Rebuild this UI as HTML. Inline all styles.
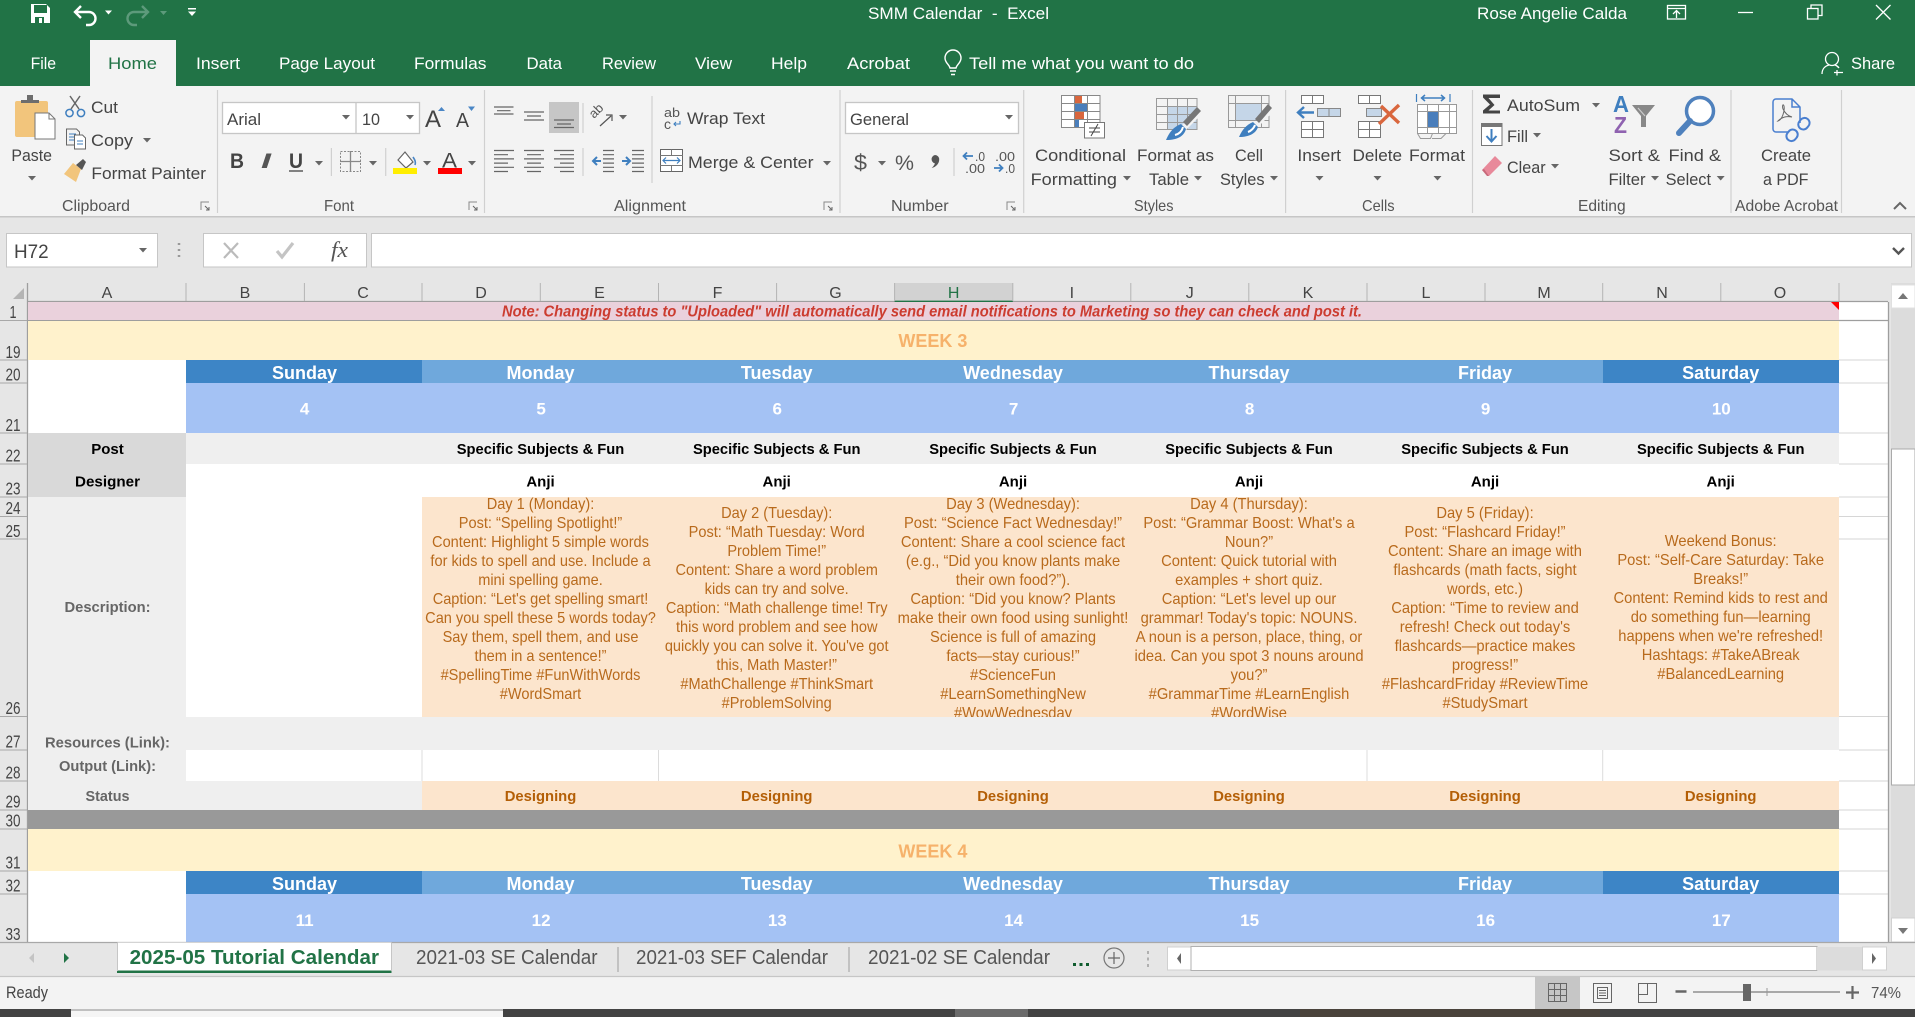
<!DOCTYPE html>
<html lang="en"><head><meta charset="utf-8"><title>SMM Calendar - Excel</title>
<style>
html,body{margin:0;padding:0;background:#f3f3f3;overflow:hidden}
svg{display:block;font-family:"Liberation Sans",Arial,sans-serif}
.r{font-size:17px;fill:#444}
.t{font-size:17px;fill:#fff}
.g{font-size:16px;fill:#555}
.c{font-size:16px;fill:#444;text-anchor:middle}
.n{font-size:17.5px;fill:#444;text-anchor:middle}
.d{font-size:18px;font-weight:700;fill:#fff;text-anchor:middle}
.dt{font-size:17px;font-weight:700;fill:#fff;text-anchor:middle;transform:translateX(.6px)}
.b{font-size:15px;font-weight:700;fill:#000;text-anchor:middle}
.l{font-size:14.5px;font-weight:700;fill:#666;text-anchor:middle}
.st{font-size:15px;font-weight:700;fill:#b45f06;text-anchor:middle}
.p{font-size:15.5px;fill:#b86a1c;text-anchor:middle}
.tab{font-size:20px;fill:#555}
</style></head><body>
<svg width="1915" height="1017" viewBox="0 0 1915 1017" xmlns="http://www.w3.org/2000/svg">
<defs>
<path id="dd" d="M-4,-2h8l-4,4.5z" fill="#666"/>
<g id="launch" fill="none" stroke="#888" stroke-width="1"><path d="M-4,4v-8h8"/><path d="M0,0l4,4M4,1v3h-3" stroke="#666"/></g>
<clipPath id="clipd"><rect x="422" y="497" width="1417" height="220"/></clipPath>
</defs>

<!-- title bar & tab strip -->
<rect width="1915" height="86" fill="#217346"/>
<path d="M31,4h15l4,4v15h-19z" fill="#fff"/><rect x="34" y="5" width="13" height="8" fill="#217346"/><rect x="35" y="17" width="9" height="6" fill="#217346"/><rect x="39" y="18" width="3" height="5" fill="#fff"/>
<path d="M75,12h14a6.5,6.5 0 0 1 0,13h-3M81,6l-6,6 6,6" fill="none" stroke="#fff" stroke-width="2.4"/>
<path d="M105,10.500h7l-3.500,4z" fill="#fff"/>
<path d="M148,12h-14a6.500,6.500 0 0 0 0,13h3M142,6l6,6 -6,6" fill="none" stroke="#5d9a7b" stroke-width="2.400"/>
<path d="M160,11h7l-3.500,4z" fill="#5d9a7b"/>
<path d="M188,8h8v1.500h-8zM188,11.500h8l-4,4.500z" fill="#fff"/>
<text class="t" x="868" y="19" textLength="181" lengthAdjust="spacingAndGlyphs" xml:space="preserve">SMM Calendar  -  Excel</text>
<text class="t" x="1477" y="19" textLength="150" lengthAdjust="spacingAndGlyphs">Rose Angelie Calda</text>
<g fill="none" stroke="#fff" stroke-width="1.300"><rect x="1667.500" y="5.500" width="18" height="13.500"/><path d="M1667,8.500h19M1676.500,18v-7M1673,14l3.500,-3.500 3.500,3.500"/>
<path d="M1738,12.500h15"/><rect x="1807.500" y="8.500" width="10.500" height="10.500"/><path d="M1811,8.500v-3.500h11v10.500h-4"/><path d="M1876,5l14.500,14.500M1890.500,5l-14.500,14.500"/></g>

<rect x="90" y="40" width="86" height="46" fill="#f3f3f3"/>
<text class="t" x="30.600" y="69" textLength="25.500" lengthAdjust="spacingAndGlyphs">File</text>
<text class="r" style="fill:#217346" x="108" y="69" textLength="49" lengthAdjust="spacingAndGlyphs">Home</text>
<text class="t" x="196" y="69" textLength="44" lengthAdjust="spacingAndGlyphs">Insert</text>
<text class="t" x="279" y="69" textLength="96" lengthAdjust="spacingAndGlyphs">Page Layout</text>
<text class="t" x="414" y="69" textLength="72.500" lengthAdjust="spacingAndGlyphs">Formulas</text>
<text class="t" x="526.500" y="69" textLength="35.500" lengthAdjust="spacingAndGlyphs">Data</text>
<text class="t" x="602" y="69" textLength="54" lengthAdjust="spacingAndGlyphs">Review</text>
<text class="t" x="695" y="69" textLength="37" lengthAdjust="spacingAndGlyphs">View</text>
<text class="t" x="771" y="69" textLength="36" lengthAdjust="spacingAndGlyphs">Help</text>
<text class="t" x="847" y="69" textLength="63" lengthAdjust="spacingAndGlyphs">Acrobat</text>
<path d="M950,68c-1,-4 -5,-5 -5,-10a8,8 0 0 1 16,0c0,5 -4,6 -5,10z" fill="none" stroke="#fff" stroke-width="1.400"/><path d="M950,71h6M951,74.500h4" stroke="#fff" stroke-width="1.600"/>
<text class="t" x="969" y="69" textLength="225" lengthAdjust="spacingAndGlyphs">Tell me what you want to do</text>
<circle cx="1832" cy="59" r="6.500" fill="none" stroke="#fff" stroke-width="1.300"/><path d="M1822,74c0,-5 3,-8 7,-9M1835,65c1.500,.500 3,1.500 4,3M1837,70v5.500M1834,72.500h9" fill="none" stroke="#fff" stroke-width="1.300"/>
<text class="t" x="1851" y="69" textLength="44" lengthAdjust="spacingAndGlyphs">Share</text>

<!-- ribbon -->
<rect y="86" width="1915" height="131" fill="#f3f3f3"/>
<rect y="216" width="1915" height="1.500" fill="#c6c6c6"/>
<g stroke="#d0d0d0" stroke-width="1.200"><path d="M217.500,90v123M484.500,90v123M840,90v123M1023.700,90v123M1285.600,90v123M1472.500,90v123M1731,90v123M1841.500,90v123"/><path d="M583,103v30M583,148v28M652,96v87M331.400,148v28M385.700,148v28M954,148v28"/></g>

<!-- clipboard -->
<rect x="15" y="101" width="33" height="36" rx="2" fill="#f2c57c"/>
<path d="M21,103v-3h6v-5h6v5h6v3z" fill="#6d6d6d"/>
<path d="M35,113h14l6,6v20h-20z" fill="#fff" stroke="#777" stroke-width="1"/><path d="M49,113v6h6" fill="none" stroke="#777"/>
<text class="r" x="11.400" y="161" textLength="40.600" lengthAdjust="spacingAndGlyphs">Paste</text>
<use href="#dd" x="32" y="178"/>
<g fill="none" stroke="#666" stroke-width="1.500"><path d="M70,96l9,13M80,96l-9,13"/></g><g fill="none" stroke="#3f7fbf" stroke-width="1.500"><circle cx="69.500" cy="113" r="3.600"/><circle cx="81" cy="113" r="3.600"/></g>
<text class="r" x="91" y="113" textLength="27" lengthAdjust="spacingAndGlyphs">Cut</text>
<g fill="#f3f3f3" stroke="#666" stroke-width="1"><path d="M66.500,129h10l3,3v13h-13z"/><path d="M74.500,135h8l3,3v11h-11z" fill="#fff"/></g><path d="M69,134h7M69,137h5M69,140h5M77,141h6M77,144h6" stroke="#3f7fbf" stroke-width="1"/>
<text class="r" x="91" y="146" textLength="42" lengthAdjust="spacingAndGlyphs">Copy</text>
<use href="#dd" x="147" y="140"/>
<path d="M64,174l9,-11 8,6 -5,13z" fill="#f2c57c"/><path d="M76,165l7,-6 3,3 -4,8z" fill="#555"/>
<text class="r" x="91.400" y="179" textLength="114.600" lengthAdjust="spacingAndGlyphs">Format Painter</text>
<text class="g" x="62" y="211" textLength="68" lengthAdjust="spacingAndGlyphs">Clipboard</text>
<use href="#launch" x="205" y="206"/>

<!-- font -->
<rect x="222.500" y="102.500" width="197" height="31" fill="#fff" stroke="#c6c6c6" stroke-width="1.300"/><path d="M356,102v32" stroke="#c6c6c6" stroke-width="1.300"/>
<text class="r" x="227" y="125" textLength="34" lengthAdjust="spacingAndGlyphs">Arial</text><use href="#dd" x="346" y="117"/>
<text class="r" x="362" y="125" textLength="18" lengthAdjust="spacingAndGlyphs">10</text><use href="#dd" x="410" y="117"/>
<text x="425" y="127" font-size="24" fill="#444" textLength="16" lengthAdjust="spacingAndGlyphs">A</text><path d="M438,111h7l-3.500,-4z" fill="#4a86c5"/>
<text x="456" y="127" font-size="20" fill="#444" textLength="13" lengthAdjust="spacingAndGlyphs">A</text><path d="M468,106.500h7l-3.500,4.500z" fill="#4a86c5"/>
<text x="230" y="168" font-size="21" font-weight="700" fill="#444" textLength="14" lengthAdjust="spacingAndGlyphs">B</text>
<text x="261" y="168" font-size="21" font-weight="700" font-style="italic" fill="#555" textLength="10" lengthAdjust="spacingAndGlyphs">I</text>
<text x="289" y="168" font-size="21" font-weight="700" fill="#444" textLength="14" lengthAdjust="spacingAndGlyphs">U</text><path d="M289,171h14" stroke="#444" stroke-width="1.300"/>
<use href="#dd" x="319" y="163"/>
<g stroke="#888" stroke-width="1" fill="none" stroke-dasharray="2 1.500"><rect x="340.500" y="151.500" width="20" height="20"/></g><path d="M350.500,151v21M340,161.500h21" stroke="#888" stroke-width="1.300"/>
<use href="#dd" x="373" y="163"/>
<path d="M398,160l7,-8 8,10 -7,6z" fill="#fff" stroke="#666" stroke-width="1.200"/><path d="M413,157c2,3 3,5 2,8" fill="none" stroke="#4a86c5" stroke-width="1.600"/><rect x="393" y="168" width="24" height="6" fill="#ffee00"/>
<use href="#dd" x="427" y="163"/>
<text x="442" y="167.500" font-size="21" fill="#444" textLength="15" lengthAdjust="spacingAndGlyphs">A</text><rect x="438" y="168" width="24" height="6" fill="#f00"/>
<use href="#dd" x="472" y="163"/>
<text class="g" x="324" y="211" textLength="30" lengthAdjust="spacingAndGlyphs">Font</text>
<use href="#launch" x="473" y="206"/>

<!-- alignment -->
<rect x="549" y="102" width="30" height="31" fill="#c6c6c6"/>
<g stroke="#666" stroke-width="1.200"><path d="M494,107h19.500M497,110.700h13.500M494,114h19.500"/><path d="M524,112h20M527,116h14M524,120h20"/><path d="M554,120h20M557,124h14M554,127.500h20"/>
<path d="M494,150.500h20M494,154.700h14M494,158.900h20M494,163.100h14M494,167.300h20M494,171.500h14"/>
<path d="M524,150.500h20M527,154.700h14M524,158.900h20M527,163.100h14M524,167.300h20M527,171.500h14"/>
<path d="M554,150.500h20M560,154.700h14M554,158.900h20M560,163.100h14M554,167.300h20M560,171.500h14"/>
<path d="M603,150.500h11M603,154.700h11M603,158.900h11M603,163.100h11M603,167.300h11M603,171.500h11M632,150.500h12M632,154.700h12M632,158.900h12M632,163.100h12M632,167.300h12M632,171.500h12"/></g>
<path d="M601,161h-7M597,157l-4,4 4,4M622,161h7M626,157l4,4 -4,4" fill="none" stroke="#3f7fbf" stroke-width="2"/>
<text transform="translate(594 119) rotate(-45)" font-size="13" fill="#555">ab</text><path d="M600,126l11,-10M606,115l6,0 0,6" fill="none" stroke="#555" stroke-width="1.200"/>
<use href="#dd" x="623" y="117"/>
<text x="664" y="117" font-size="13" fill="#555" textLength="16" lengthAdjust="spacingAndGlyphs">ab</text><text x="664" y="129" font-size="14" fill="#555">c</text><path d="M680,121v3h-6M676,122l-2,2 2,2" fill="none" stroke="#3f7fbf" stroke-width="1.100"/>
<text class="r" x="687" y="124" textLength="78" lengthAdjust="spacingAndGlyphs">Wrap Text</text>
<g fill="#fff" stroke="#666" stroke-width="1"><rect x="660.500" y="149.500" width="22" height="22"/></g><path d="M660,155.500h23M660,165.500h23M671.500,149.500v6M671.500,165.500v6" stroke="#777"/><path d="M663,160.500h17M666,157.500l-3,3 3,3M677,157.500l3,3 -3,3" fill="none" stroke="#3f7fbf" stroke-width="1.200"/>
<text class="r" x="688" y="168" textLength="125.500" lengthAdjust="spacingAndGlyphs">Merge &amp; Center</text>
<use href="#dd" x="827" y="163"/>
<text class="g" x="614" y="211" textLength="72" lengthAdjust="spacingAndGlyphs">Alignment</text>
<use href="#launch" x="828" y="206"/>

<!-- number -->
<rect x="845.500" y="102.500" width="173" height="31" fill="#fff" stroke="#c6c6c6" stroke-width="1.300"/>
<text class="r" x="850" y="125" textLength="59" lengthAdjust="spacingAndGlyphs">General</text><use href="#dd" x="1009" y="117"/>
<text x="854" y="170" font-size="22" fill="#555" textLength="13" lengthAdjust="spacingAndGlyphs">$</text><use href="#dd" x="882" y="163"/>
<text x="895" y="170" font-size="21" fill="#555" textLength="19" lengthAdjust="spacingAndGlyphs">%</text>
<path d="M935,155a4.200,4.200 0 0 1 4.200,4.500c0,4 -3,7.500 -7.500,8.500c2,-2 3,-3.500 3.200,-4.600a4.300,4.300 0 0 1 .1,-8.400z" fill="#555"/>
<text x="975" y="161" font-size="13" fill="#555" textLength="10" lengthAdjust="spacingAndGlyphs">.0</text><text x="965" y="173" font-size="13" fill="#555" textLength="20" lengthAdjust="spacingAndGlyphs">.00</text>
<text x="995" y="161" font-size="13" fill="#555" textLength="20" lengthAdjust="spacingAndGlyphs">.00</text><text x="1005" y="173" font-size="13" fill="#555" textLength="10" lengthAdjust="spacingAndGlyphs">.0</text>
<path d="M973,156h-9M967,152.500l-3.500,3.500 3.500,3.500M994,168h8M999,164.500l3.500,3.500 -3.500,3.500" fill="none" stroke="#3f7fbf" stroke-width="1.800"/>
<text class="g" x="891" y="211" textLength="57.600" lengthAdjust="spacingAndGlyphs">Number</text>
<use href="#launch" x="1011" y="206"/>

<!-- styles -->
<rect x="1061.500" y="95.500" width="38.500" height="32" fill="#fff"/>
<rect x="1074" y="95" width="8" height="8" fill="#d9663d"/><rect x="1074" y="103" width="13" height="8" fill="#4a7ebb"/><rect x="1074" y="111" width="10" height="8" fill="#d9663d"/><rect x="1074" y="119" width="5" height="8" fill="#4a7ebb"/>
<path d="M1061.500,95.500h38.500v32h-38.500zM1061.500,103.500h38.500M1061.500,111.500h38.500M1061.500,119.500h38.500M1074.500,95.500v32M1087.500,95.500v32" fill="none" stroke="#888" stroke-width="1"/>
<rect x="1084.500" y="122.500" width="20" height="15.500" fill="#fff" stroke="#777"/><path d="M1089,128h11M1089,132h11M1091,136l7,-12" stroke="#444" fill="none"/>
<text class="r" x="1035" y="161" textLength="91" lengthAdjust="spacingAndGlyphs">Conditional</text>
<text class="r" x="1030.600" y="185" textLength="86.400" lengthAdjust="spacingAndGlyphs">Formatting</text><use href="#dd" x="1127" y="178"/>
<rect x="1167" y="106" width="30" height="24" fill="#c5d6e8"/>
<path d="M1156.500,98.500h40.500v31h-40.500zM1156.500,106.500h40.500M1156.500,114.500h40.500M1156.500,122.500h40.500M1167.500,98.500v31M1177.500,98.500v31M1187.500,98.500v31" fill="none" stroke="#999" stroke-width="1"/>
<path d="M1176,140l22,-22 2,-10 -24,23z" fill="#f3f3f3"/>
<path d="M1197,107l4,4 -14,15 -4,-4z" fill="#777"/><path d="M1166,140c3,-7 7,-13 15,-16l5,5c-2,7 -8,11 -20,11z" fill="#3f7fbf"/><path d="M1175,135c4,-1 7,-4 8,-8" fill="none" stroke="#fff" stroke-width="2"/>
<text class="r" x="1137" y="161" textLength="77" lengthAdjust="spacingAndGlyphs">Format as</text>
<text class="r" x="1149" y="185" textLength="40" lengthAdjust="spacingAndGlyphs">Table</text><use href="#dd" x="1198" y="178"/>
<rect x="1235" y="103" width="27" height="17" fill="#c5d6e8"/>
<path d="M1228.500,95.500h40.500v32h-40.500zM1228.500,103.500h40.500M1228.500,120.500h40.500M1235.500,95.500v32M1261.500,95.500v32" fill="none" stroke="#999" stroke-width="1"/>
<path d="M1248,137l22,-22 2,-8 -24,22z" fill="#f3f3f3"/>
<path d="M1268,104l4,4 -13,15 -4,-4z" fill="#777"/><path d="M1239,137c3,-7 7,-12 14,-15l5,5c-2,6 -8,10 -19,10z" fill="#3f7fbf"/><path d="M1248,132c3,-1 6,-4 7,-7" fill="none" stroke="#fff" stroke-width="2"/>
<text class="r" x="1235" y="161" textLength="28" lengthAdjust="spacingAndGlyphs">Cell</text>
<text class="r" x="1220" y="185" textLength="44.500" lengthAdjust="spacingAndGlyphs">Styles</text><use href="#dd" x="1274" y="178"/>
<text class="g" x="1134" y="211" textLength="39.500" lengthAdjust="spacingAndGlyphs">Styles</text>

<!-- cells -->
<g fill="#fff" stroke="#777" stroke-width="1"><path d="M1301.500,95.500h22v8h-22zM1312.500,95.500v8"/><path d="M1301.500,121.500h22v16h-22zM1312.500,121.500v16M1301.500,129.500h22"/>
<path d="M1358.500,95.500h22v8h-22zM1369.500,95.500v8"/><path d="M1358.500,121.500h22v16h-22zM1369.500,121.500v16M1358.500,129.500h22"/></g>
<rect x="1317.500" y="108.500" width="23" height="8" fill="#c5d6e8" stroke="#888"/><path d="M1329,108v9" stroke="#888"/>
<path d="M1314,112.500h-15M1304,107l-6,5.500 6,5.500" fill="none" stroke="#3f7fbf" stroke-width="2.400"/>
<rect x="1366.500" y="108.500" width="15" height="8" fill="#c5d6e8" stroke="#888"/>
<path d="M1381,106l18,17M1399,105l-20,19" stroke="#d9663d" stroke-width="3.400" fill="none"/>
<text class="r" x="1297.400" y="161" textLength="43.600" lengthAdjust="spacingAndGlyphs">Insert</text><use href="#dd" x="1319.500" y="178"/>
<text class="r" x="1352.500" y="161" textLength="49.500" lengthAdjust="spacingAndGlyphs">Delete</text><use href="#dd" x="1377.500" y="178"/>
<path d="M1416.500,94v8M1450,94v8" stroke="#3f7fbf" stroke-width="1.200"/><path d="M1421,98h24M1425,95l-3.500,3 3.500,3M1441,95l3.500,3 -3.500,3" fill="none" stroke="#3f7fbf" stroke-width="1.500"/>
<rect x="1417" y="104" width="40" height="29" fill="#fff"/><rect x="1427" y="111" width="11" height="16" fill="#4a7ebb"/>
<path d="M1417.500,104.500h39v29h-39zM1417.500,111.500h39M1417.500,127.500h39M1427.500,104.500v29M1438.500,104.500v29M1449.500,104.500v29M1417.500,133.500l3,5h10l2,-5M1432,138.500h9l5,-5" fill="none" stroke="#999" stroke-width="1"/>
<text class="r" x="1409" y="161" textLength="56" lengthAdjust="spacingAndGlyphs">Format</text><use href="#dd" x="1437.500" y="178"/>
<text class="g" x="1362" y="211" textLength="32.600" lengthAdjust="spacingAndGlyphs">Cells</text>

<!-- editing -->
<path d="M1483,94.500h17v3.500h-11.500l6,7 -6,5.500h11.500v3h-17v-3l7,-6 -7,-7z" fill="#444"/>
<text class="r" x="1507" y="111" textLength="73" lengthAdjust="spacingAndGlyphs">AutoSum</text><use href="#dd" x="1596" y="105"/>
<rect x="1481.500" y="123.500" width="20.500" height="22" fill="#fff" stroke="#777"/><rect x="1481" y="123" width="21" height="4" fill="#777"/>
<path d="M1491.500,129v12M1486.500,136l5,5.500 5,-5.500" fill="none" stroke="#3f7fbf" stroke-width="2"/>
<text class="r" x="1507" y="142" textLength="21" lengthAdjust="spacingAndGlyphs">Fill</text><use href="#dd" x="1537" y="135"/>
<path d="M1482,170l13,-14 7,7 -13,13z" fill="#e8899a"/><path d="M1482,170l5,6 2,0 -5,-7z" fill="#c8697a"/>
<text class="r" x="1507" y="173" textLength="38.600" lengthAdjust="spacingAndGlyphs">Clear</text><use href="#dd" x="1555" y="166"/>
<text x="1613" y="112" font-size="23" font-weight="700" fill="#3f7fbf" textLength="16" lengthAdjust="spacingAndGlyphs">A</text>
<text x="1614" y="133" font-size="23" font-weight="700" fill="#8f62b0" textLength="13" lengthAdjust="spacingAndGlyphs">Z</text>
<path d="M1632,105h23l-9,11v11h-5v-11z" fill="#888"/><path d="M1638,108l7,8" stroke="#ccc" stroke-width="1.200"/>
<circle cx="1700" cy="111" r="13.500" fill="#fff" stroke="#4f81bd" stroke-width="3.500"/><path d="M1690,121l-11,12" stroke="#4f81bd" stroke-width="6" stroke-linecap="round"/>
<text class="r" x="1608.500" y="161" textLength="51.500" lengthAdjust="spacingAndGlyphs">Sort &amp;</text>
<text class="r" x="1608.500" y="185" textLength="37" lengthAdjust="spacingAndGlyphs">Filter</text><use href="#dd" x="1655" y="178"/>
<text class="r" x="1668.500" y="161" textLength="52.500" lengthAdjust="spacingAndGlyphs">Find &amp;</text>
<text class="r" x="1665.600" y="185" textLength="45.400" lengthAdjust="spacingAndGlyphs">Select</text><use href="#dd" x="1720.700" y="178"/>
<text class="g" x="1578" y="211" textLength="47.600" lengthAdjust="spacingAndGlyphs">Editing</text>

<!-- acrobat -->
<path d="M1788,132h-12a3,3 0 0 1 -3,-3v-27a3,3 0 0 1 3,-3h16l8,8v16M1792,99v8h8" fill="none" stroke="#4a7fd0" stroke-width="1.500"/>
<path d="M1778,121c4,-1 7,-10 6,-15c-1,-3 -2,0 -1,3c2,4 5,7 9,8c-6,-1 -10,0 -14,4z" fill="none" stroke="#666" stroke-width="1"/>
<g fill="none" stroke="#4a7fd0" stroke-width="2"><rect x="-5" y="-9" width="10" height="12" rx="5" transform="translate(1802 126) rotate(40)"/><rect x="-5" y="-3" width="10" height="12" rx="5" transform="translate(1794 133) rotate(40)"/></g>
<text class="r" x="1761" y="161" textLength="50" lengthAdjust="spacingAndGlyphs">Create</text>
<text class="r" x="1763" y="185" textLength="45.500" lengthAdjust="spacingAndGlyphs">a PDF</text>
<text class="g" x="1735" y="211" textLength="103" lengthAdjust="spacingAndGlyphs">Adobe Acrobat</text>
<path d="M1894,209l6,-6 6,6" fill="none" stroke="#666" stroke-width="2"/>

<!-- formula bar -->
<rect y="217.500" width="1915" height="65.500" fill="#e6e6e6"/>
<rect x="6.500" y="233.500" width="151" height="33.500" fill="#fff" stroke="#c6c6c6"/>
<text class="r" x="14" y="258" textLength="34.600" lengthAdjust="spacingAndGlyphs" style="font-size:19px">H72</text><use href="#dd" x="143" y="250"/>
<path d="M179,243v2M179,249v2M179,255v2" stroke="#999" stroke-width="2.500"/>
<rect x="203.500" y="233.500" width="163" height="33.500" fill="#fff" stroke="#c6c6c6"/>
<path d="M224,243l14,15M238,243l-14,15" stroke="#bbb" stroke-width="2.200" fill="none"/>
<path d="M277,251l5,6 11,-14" stroke="#c4c4c4" stroke-width="3.200" fill="none"/>
<text x="331" y="257" font-size="22" font-family="Liberation Serif" font-style="italic" fill="#555" textLength="17" lengthAdjust="spacingAndGlyphs">fx</text>
<rect x="371.500" y="233.500" width="1540" height="33.500" fill="#fff" stroke="#c6c6c6"/>
<path d="M1893,248l5.500,5.500 5.500,-5.500" fill="none" stroke="#555" stroke-width="2.400"/>

<!-- sheet base -->
<rect y="283" width="1915" height="659" fill="#e6e6e6"/>
<rect x="27" y="302" width="1861" height="640" fill="#fff"/>
<!-- col headers -->
<rect x="894.600" y="283" width="118.200" height="18" fill="#d2d2d2"/>
<path d="M27,301.500h1861" stroke="#9e9e9e" stroke-width="1.300"/>
<path d="M894.600,301.500h118.200" stroke="#217346" stroke-width="1.800"/>
<path d="M27.500,283v18M186,283v18M304.400,283v18M422,283v18M540.300,283v18M658.500,283v18M776.600,283v18M894.600,283v18M1012.800,283v18M1130.800,283v18M1248.800,283v18M1367,283v18M1485,283v18M1602.700,283v18M1720.800,283v18M1839,283v18" stroke="#b4b4b4" stroke-width="1"/>
<path d="M24,288v11h-11z" fill="#b4b4b4"/>
<g class="cols">
<text class="c" x="107" y="298">A</text><text class="c" x="245" y="298">B</text><text class="c" x="363" y="298">C</text><text class="c" x="481" y="298">D</text><text class="c" x="599.500" y="298">E</text><text class="c" x="717.500" y="298">F</text><text class="c" x="835.500" y="298">G</text><text class="c" style="fill:#217346" x="953.700" y="298">H</text><text class="c" x="1071.800" y="298">I</text><text class="c" x="1189.800" y="298">J</text><text class="c" x="1308" y="298">K</text><text class="c" x="1426" y="298">L</text><text class="c" x="1544" y="298">M</text><text class="c" x="1662" y="298">N</text><text class="c" x="1780" y="298">O</text>
</g>
<!-- row headers -->
<path d="M27.500,283v659" stroke="#9e9e9e" stroke-width="1.300"/>
<path d="M0,320.500h27M0,360h27M0,383h27M0,433h27M0,464h27M0,497h27M0,516.500h27M0,539h27M0,716.500h27M0,750h27M0,781h27M0,810h27M0,829h27M0,871h27M0,894h27" stroke="#a8a8a8" stroke-width="1"/>
<g>
<text class="n" x="13" y="318" textLength="7" lengthAdjust="spacingAndGlyphs">1</text>
<text class="n" x="13" y="358" textLength="15" lengthAdjust="spacingAndGlyphs">19</text>
<text class="n" x="13" y="380.500" textLength="15" lengthAdjust="spacingAndGlyphs">20</text>
<text class="n" x="13" y="431" textLength="15" lengthAdjust="spacingAndGlyphs">21</text>
<text class="n" x="13" y="461.500" textLength="15" lengthAdjust="spacingAndGlyphs">22</text>
<text class="n" x="13" y="494.500" textLength="15" lengthAdjust="spacingAndGlyphs">23</text>
<text class="n" x="13" y="514" textLength="15" lengthAdjust="spacingAndGlyphs">24</text>
<text class="n" x="13" y="537" textLength="15" lengthAdjust="spacingAndGlyphs">25</text>
<text class="n" x="13" y="714" textLength="15" lengthAdjust="spacingAndGlyphs">26</text>
<text class="n" x="13" y="747.500" textLength="15" lengthAdjust="spacingAndGlyphs">27</text>
<text class="n" x="13" y="778.500" textLength="15" lengthAdjust="spacingAndGlyphs">28</text>
<text class="n" x="13" y="807.500" textLength="15" lengthAdjust="spacingAndGlyphs">29</text>
<text class="n" x="13" y="826.500" textLength="15" lengthAdjust="spacingAndGlyphs">30</text>
<text class="n" x="13" y="868.500" textLength="15" lengthAdjust="spacingAndGlyphs">31</text>
<text class="n" x="13" y="891.500" textLength="15" lengthAdjust="spacingAndGlyphs">32</text>
<text class="n" x="13" y="940" textLength="15" lengthAdjust="spacingAndGlyphs">33</text>
</g>

<!-- gutter lines -->
<path d="M1839,360h49M1839,383h49M1839,433h49M1839,464h49M1839,497h49M1839,516.500h49M1839,539h49M1839,716.500h49M1839,750h49M1839,781h49M1839,810h49M1839,829h49M1839,871h49M1839,894h49" stroke="#d6d6d6" stroke-width="1"/>
<path d="M28,320.500h1860" stroke="#9e9e9e" stroke-width="1.300"/>
<path d="M1888.500,302v640" stroke="#9e9e9e" stroke-width="1.300"/>

<!-- cells fill -->
<rect x="28" y="302" width="1811" height="18" fill="#ead1dc"/>
<path d="M1831,302h8v8z" fill="#f00"/>
<rect x="28" y="321" width="1811" height="39" fill="#fff2cc"/>
<rect x="186" y="360" width="236" height="23" fill="#3d85c6"/><rect x="422" y="360" width="1180.700" height="23" fill="#6fa8dc"/><rect x="1602.700" y="360" width="236.300" height="23" fill="#3d85c6"/>
<rect x="186" y="383" width="1653" height="50" fill="#a4c2f4"/>
<rect x="28" y="433" width="158" height="64" fill="#d9d9d9"/>
<rect x="186" y="433" width="1653" height="31" fill="#efefef"/>
<rect x="28" y="497" width="158" height="220" fill="#efefef"/>
<rect x="422" y="497" width="1417" height="220" fill="#fce5cd"/>
<rect x="28" y="717" width="1811" height="33" fill="#efefef"/>
<rect x="28" y="750" width="158" height="60" fill="#efefef"/>
<path d="M422,750v31M658.500,750v31M1367,750v31M1602.700,750v31" stroke="#dcdcdc"/>
<rect x="186" y="781" width="236" height="29" fill="#efefef"/>
<rect x="422" y="781" width="1417" height="29" fill="#fce5cd"/>
<rect x="28" y="810" width="1811" height="19" fill="#999"/>
<rect x="28" y="829" width="1811" height="42" fill="#fff2cc"/>
<rect x="186" y="871" width="236" height="23" fill="#3d85c6"/><rect x="422" y="871" width="1180.700" height="23" fill="#6fa8dc"/><rect x="1602.700" y="871" width="236.300" height="23" fill="#3d85c6"/>
<rect x="186" y="894" width="1653" height="48" fill="#a4c2f4"/>

<!-- cell text -->
<text x="502" y="316.500" font-size="15.500" font-weight="700" font-style="italic" fill="#cc3c30" textLength="860" lengthAdjust="spacingAndGlyphs">Note: Changing status to "Uploaded" will automatically send email notifications to Marketing so they can check and post it.</text>
<text x="898.400" y="347" font-size="18" font-weight="700" fill="#f6b26b" textLength="69" lengthAdjust="spacingAndGlyphs">WEEK 3</text>
<text x="898.400" y="857.500" font-size="18" font-weight="700" fill="#f6b26b" textLength="69" lengthAdjust="spacingAndGlyphs">WEEK 4</text>

<g>
<text class="d" x="304.500" y="379">Sunday</text><text class="d" x="540.500" y="379">Monday</text><text class="d" x="776.700" y="379">Tuesday</text><text class="d" x="1013" y="379">Wednesday</text><text class="d" x="1249" y="379">Thursday</text><text class="d" x="1485" y="379">Friday</text><text class="d" x="1720.700" y="379">Saturday</text>
<text class="dt" x="304" y="414.500">4</text><text class="dt" x="540.500" y="414.500">5</text><text class="dt" x="776.700" y="414.500">6</text><text class="dt" x="1013" y="414.500">7</text><text class="dt" x="1249" y="414.500">8</text><text class="dt" x="1485" y="414.500">9</text><text class="dt" x="1720.700" y="414.500">10</text>
<text class="d" x="304.500" y="890">Sunday</text><text class="d" x="540.500" y="890">Monday</text><text class="d" x="776.700" y="890">Tuesday</text><text class="d" x="1013" y="890">Wednesday</text><text class="d" x="1249" y="890">Thursday</text><text class="d" x="1485" y="890">Friday</text><text class="d" x="1720.700" y="890">Saturday</text>
<text class="dt" x="304" y="926">11</text><text class="dt" x="540.500" y="926">12</text><text class="dt" x="776.700" y="926">13</text><text class="dt" x="1013" y="926">14</text><text class="dt" x="1249" y="926">15</text><text class="dt" x="1485" y="926">16</text><text class="dt" x="1720.700" y="926">17</text>
</g>
<text class="b" x="107.500" y="454">Post</text><text class="b" x="107.500" y="486.700" textLength="65" lengthAdjust="spacingAndGlyphs">Designer</text>
<text class="b" x="540.500" y="454" textLength="167.500" lengthAdjust="spacingAndGlyphs">Specific Subjects &amp; Fun</text>
<text class="b" x="776.700" y="454" textLength="167.500" lengthAdjust="spacingAndGlyphs">Specific Subjects &amp; Fun</text>
<text class="b" x="1013" y="454" textLength="167.500" lengthAdjust="spacingAndGlyphs">Specific Subjects &amp; Fun</text>
<text class="b" x="1249" y="454" textLength="167.500" lengthAdjust="spacingAndGlyphs">Specific Subjects &amp; Fun</text>
<text class="b" x="1485" y="454" textLength="167.500" lengthAdjust="spacingAndGlyphs">Specific Subjects &amp; Fun</text>
<text class="b" x="1720.700" y="454" textLength="167.500" lengthAdjust="spacingAndGlyphs">Specific Subjects &amp; Fun</text>
<text class="b" x="540.500" y="486.700">Anji</text><text class="b" x="776.700" y="486.700">Anji</text><text class="b" x="1013" y="486.700">Anji</text><text class="b" x="1249" y="486.700">Anji</text><text class="b" x="1485" y="486.700">Anji</text><text class="b" x="1720.700" y="486.700">Anji</text>
<text class="l" x="107.500" y="612" textLength="86" lengthAdjust="spacingAndGlyphs">Description:</text>
<text class="l" x="107.500" y="747.500" textLength="125" lengthAdjust="spacingAndGlyphs">Resources (Link):</text>
<text class="l" x="107.500" y="771" textLength="97" lengthAdjust="spacingAndGlyphs">Output (Link):</text>
<text class="l" x="107.500" y="801" textLength="44" lengthAdjust="spacingAndGlyphs">Status</text>
<text class="st" x="540.500" y="801" textLength="71.600" lengthAdjust="spacingAndGlyphs">Designing</text><text class="st" x="776.700" y="801" textLength="71.600" lengthAdjust="spacingAndGlyphs">Designing</text><text class="st" x="1013" y="801" textLength="71.600" lengthAdjust="spacingAndGlyphs">Designing</text><text class="st" x="1249" y="801" textLength="71.600" lengthAdjust="spacingAndGlyphs">Designing</text><text class="st" x="1485" y="801" textLength="71.600" lengthAdjust="spacingAndGlyphs">Designing</text><text class="st" x="1720.700" y="801" textLength="71.600" lengthAdjust="spacingAndGlyphs">Designing</text>

<!-- descriptions -->
<g clip-path="url(#clipd)">
<g transform="translate(540.500 0) scale(.94 1)">
<text class="p" y="509">Day 1 (Monday):</text>
<text class="p" y="528">Post: “Spelling Spotlight!”</text>
<text class="p" y="547">Content: Highlight 5 simple words</text>
<text class="p" y="566">for kids to spell and use. Include a</text>
<text class="p" y="585">mini spelling game.</text>
<text class="p" y="604">Caption: “Let's get spelling smart!</text>
<text class="p" y="623">Can you spell these 5 words today?</text>
<text class="p" y="642">Say them, spell them, and use</text>
<text class="p" y="661">them in a sentence!”</text>
<text class="p" y="680">#SpellingTime #FunWithWords</text>
<text class="p" y="699">#WordSmart</text>
</g>
<g transform="translate(776.700 0) scale(.94 1)">
<text class="p" y="518">Day 2 (Tuesday):</text>
<text class="p" y="537">Post: “Math Tuesday: Word</text>
<text class="p" y="556">Problem Time!”</text>
<text class="p" y="575">Content: Share a word problem</text>
<text class="p" y="594">kids can try and solve.</text>
<text class="p" y="613">Caption: “Math challenge time! Try</text>
<text class="p" y="632">this word problem and see how</text>
<text class="p" y="651">quickly you can solve it. You've got</text>
<text class="p" y="670">this, Math Master!”</text>
<text class="p" y="689">#MathChallenge #ThinkSmart</text>
<text class="p" y="708">#ProblemSolving</text>
</g>
<g transform="translate(1013 0) scale(.95 1)">
<text class="p" y="509">Day 3 (Wednesday):</text>
<text class="p" y="528">Post: “Science Fact Wednesday!”</text>
<text class="p" y="547">Content: Share a cool science fact</text>
<text class="p" y="566">(e.g., “Did you know plants make</text>
<text class="p" y="585">their own food?”).</text>
<text class="p" y="604">Caption: “Did you know? Plants</text>
<text class="p" y="623">make their own food using sunlight!</text>
<text class="p" y="642">Science is full of amazing</text>
<text class="p" y="661">facts—stay curious!”</text>
<text class="p" y="680">#ScienceFun</text>
<text class="p" y="699">#LearnSomethingNew</text>
<text class="p" y="718">#WowWednesday</text>
</g>
<g transform="translate(1249 0) scale(.95 1)">
<text class="p" y="509">Day 4 (Thursday):</text>
<text class="p" y="528">Post: “Grammar Boost: What's a</text>
<text class="p" y="547">Noun?”</text>
<text class="p" y="566">Content: Quick tutorial with</text>
<text class="p" y="585">examples + short quiz.</text>
<text class="p" y="604">Caption: “Let's level up our</text>
<text class="p" y="623">grammar! Today's topic: NOUNS.</text>
<text class="p" y="642">A noun is a person, place, thing, or</text>
<text class="p" y="661">idea. Can you spot 3 nouns around</text>
<text class="p" y="680">you?”</text>
<text class="p" y="699">#GrammarTime #LearnEnglish</text>
<text class="p" y="718">#WordWise</text>
</g>
<g transform="translate(1485 0) scale(.95 1)">
<text class="p" y="518">Day 5 (Friday):</text>
<text class="p" y="537">Post: “Flashcard Friday!”</text>
<text class="p" y="556">Content: Share an image with</text>
<text class="p" y="575">flashcards (math facts, sight</text>
<text class="p" y="594">words, etc.)</text>
<text class="p" y="613">Caption: “Time to review and</text>
<text class="p" y="632">refresh! Check out today's</text>
<text class="p" y="651">flashcards—practice makes</text>
<text class="p" y="670">progress!”</text>
<text class="p" y="689">#FlashcardFriday #ReviewTime</text>
<text class="p" y="708">#StudySmart</text>
</g>
<g transform="translate(1720.700 0) scale(.95 1)">
<text class="p" y="546">Weekend Bonus:</text>
<text class="p" y="565">Post: “Self-Care Saturday: Take</text>
<text class="p" y="584">Breaks!”</text>
<text class="p" y="603">Content: Remind kids to rest and</text>
<text class="p" y="622">do something fun—learning</text>
<text class="p" y="641">happens when we're refreshed!</text>
<text class="p" y="660">Hashtags: #TakeABreak</text>
<text class="p" y="679">#BalancedLearning</text>
</g>
</g>

<!-- vertical scrollbar -->
<rect x="1891" y="283" width="24" height="659" fill="#dcdcdc"/>
<rect x="1891.500" y="285" width="23.500" height="23" fill="#fff" stroke="#e0e0e0"/>
<path d="M1898,299h10l-5,-6z" fill="#777"/>
<rect x="1891.500" y="449" width="23.500" height="336" fill="#fff" stroke="#aaa" stroke-width="1"/>
<rect x="1891.500" y="918" width="23.500" height="24" fill="#fff" stroke="#d0d0d0"/>
<path d="M1898,928h10l-5,6z" fill="#777"/>

<!-- tab bar -->
<rect y="942" width="1915" height="34" fill="#e6e6e6"/>
<path d="M0,942.500h1915" stroke="#a8a8a8" stroke-width="1.300"/>
<path d="M34,953v10l-5,-5z" fill="#c4c4c4"/><path d="M64,953v10l5,-5z" fill="#217346"/>
<rect x="117.500" y="942.500" width="274" height="30" fill="#fff"/>
<rect x="117" y="970.500" width="274.500" height="2.500" fill="#217346"/>
<path d="M117.500,943v28M391.500,943v28" stroke="#c6c6c6"/>
<text class="tab" style="fill:#217346;font-weight:700" x="129.600" y="964" textLength="249.400" lengthAdjust="spacingAndGlyphs">2025-05 Tutorial Calendar</text>
<text class="tab" x="416" y="964" textLength="181.600" lengthAdjust="spacingAndGlyphs">2021-03 SE Calendar</text>
<path d="M618,947v25M849,947v25" stroke="#9e9e9e"/>
<text class="tab" x="636" y="964" textLength="192" lengthAdjust="spacingAndGlyphs">2021-03 SEF Calendar</text>
<text class="tab" x="868" y="964" textLength="182" lengthAdjust="spacingAndGlyphs">2021-02 SE Calendar</text>
<path d="M1073,963h3v3h-3zM1079.500,963h3v3h-3zM1086,963h3v3h-3z" fill="#0f5c2e"/>
<circle cx="1114" cy="958" r="10" fill="none" stroke="#777" stroke-width="1.200"/><path d="M1108,958h12M1114,952v12" stroke="#666" stroke-width="1.200"/>
<path d="M1148,951v3M1148,957.500v3M1148,964v3" stroke="#b0b0b0" stroke-width="2"/>
<rect x="1167.500" y="947" width="23.500" height="23" fill="#fff" stroke="#d0d0d0"/><path d="M1181,953v11l-4,-5.500z" fill="#666"/>
<rect x="1191" y="946.500" width="626" height="24" fill="#fff" stroke="#b0b0b0"/>
<rect x="1817" y="947" width="45" height="23.500" fill="#dcdcdc"/>
<rect x="1862.500" y="947" width="24" height="23" fill="#fff" stroke="#d0d0d0"/><path d="M1872,953v11l4,-5.500z" fill="#666"/>

<!-- status bar -->
<rect y="976" width="1915" height="33" fill="#f3f3f3"/>
<path d="M0,976.500h1915" stroke="#c6c6c6" stroke-width="1.300"/>
<text class="r" x="6" y="998" textLength="42" lengthAdjust="spacingAndGlyphs">Ready</text>
<rect x="1535" y="977" width="45" height="32" fill="#c6c6c6"/>
<path d="M1548.500,983.500h18v18h-18zM1548.500,989.500h18M1548.500,995.500h18M1554.500,983.500v18M1560.500,983.500v18" fill="none" stroke="#666"/>
<path d="M1593.500,983.500h18v19h-18zM1597.500,987.500h10v11h-10zM1599,990.500h7M1599,993h7M1599,995.500h7" fill="none" stroke="#666"/>
<path d="M1638.500,983.500h18v19h-18zM1638.500,994.500h9v-11" fill="none" stroke="#666"/>
<path d="M1675.500,991.500h11" stroke="#666" stroke-width="2.500"/>
<path d="M1693,992h147" stroke="#a8a8a8" stroke-width="2"/><path d="M1767,988v8" stroke="#999"/>
<rect x="1743" y="984" width="8" height="17" fill="#666"/>
<path d="M1846,992.500h13M1852.500,986v13" stroke="#666" stroke-width="2.200"/>
<text class="g" x="1871" y="998" textLength="30" lengthAdjust="spacingAndGlyphs">74%</text>

<!-- taskbar strip -->
<rect y="1009" width="1915" height="8" fill="#434343"/>
<rect x="71" y="1009" width="432" height="8" fill="#f5f5f5"/><rect x="71" y="1009" width="432" height="2" fill="#c0c0c0"/>
<rect x="955" y="1009" width="73" height="8" fill="#6b6b6b"/>
<rect x="1300" y="1009" width="300" height="8" fill="#4a433b"/>
</svg>
</body></html>
